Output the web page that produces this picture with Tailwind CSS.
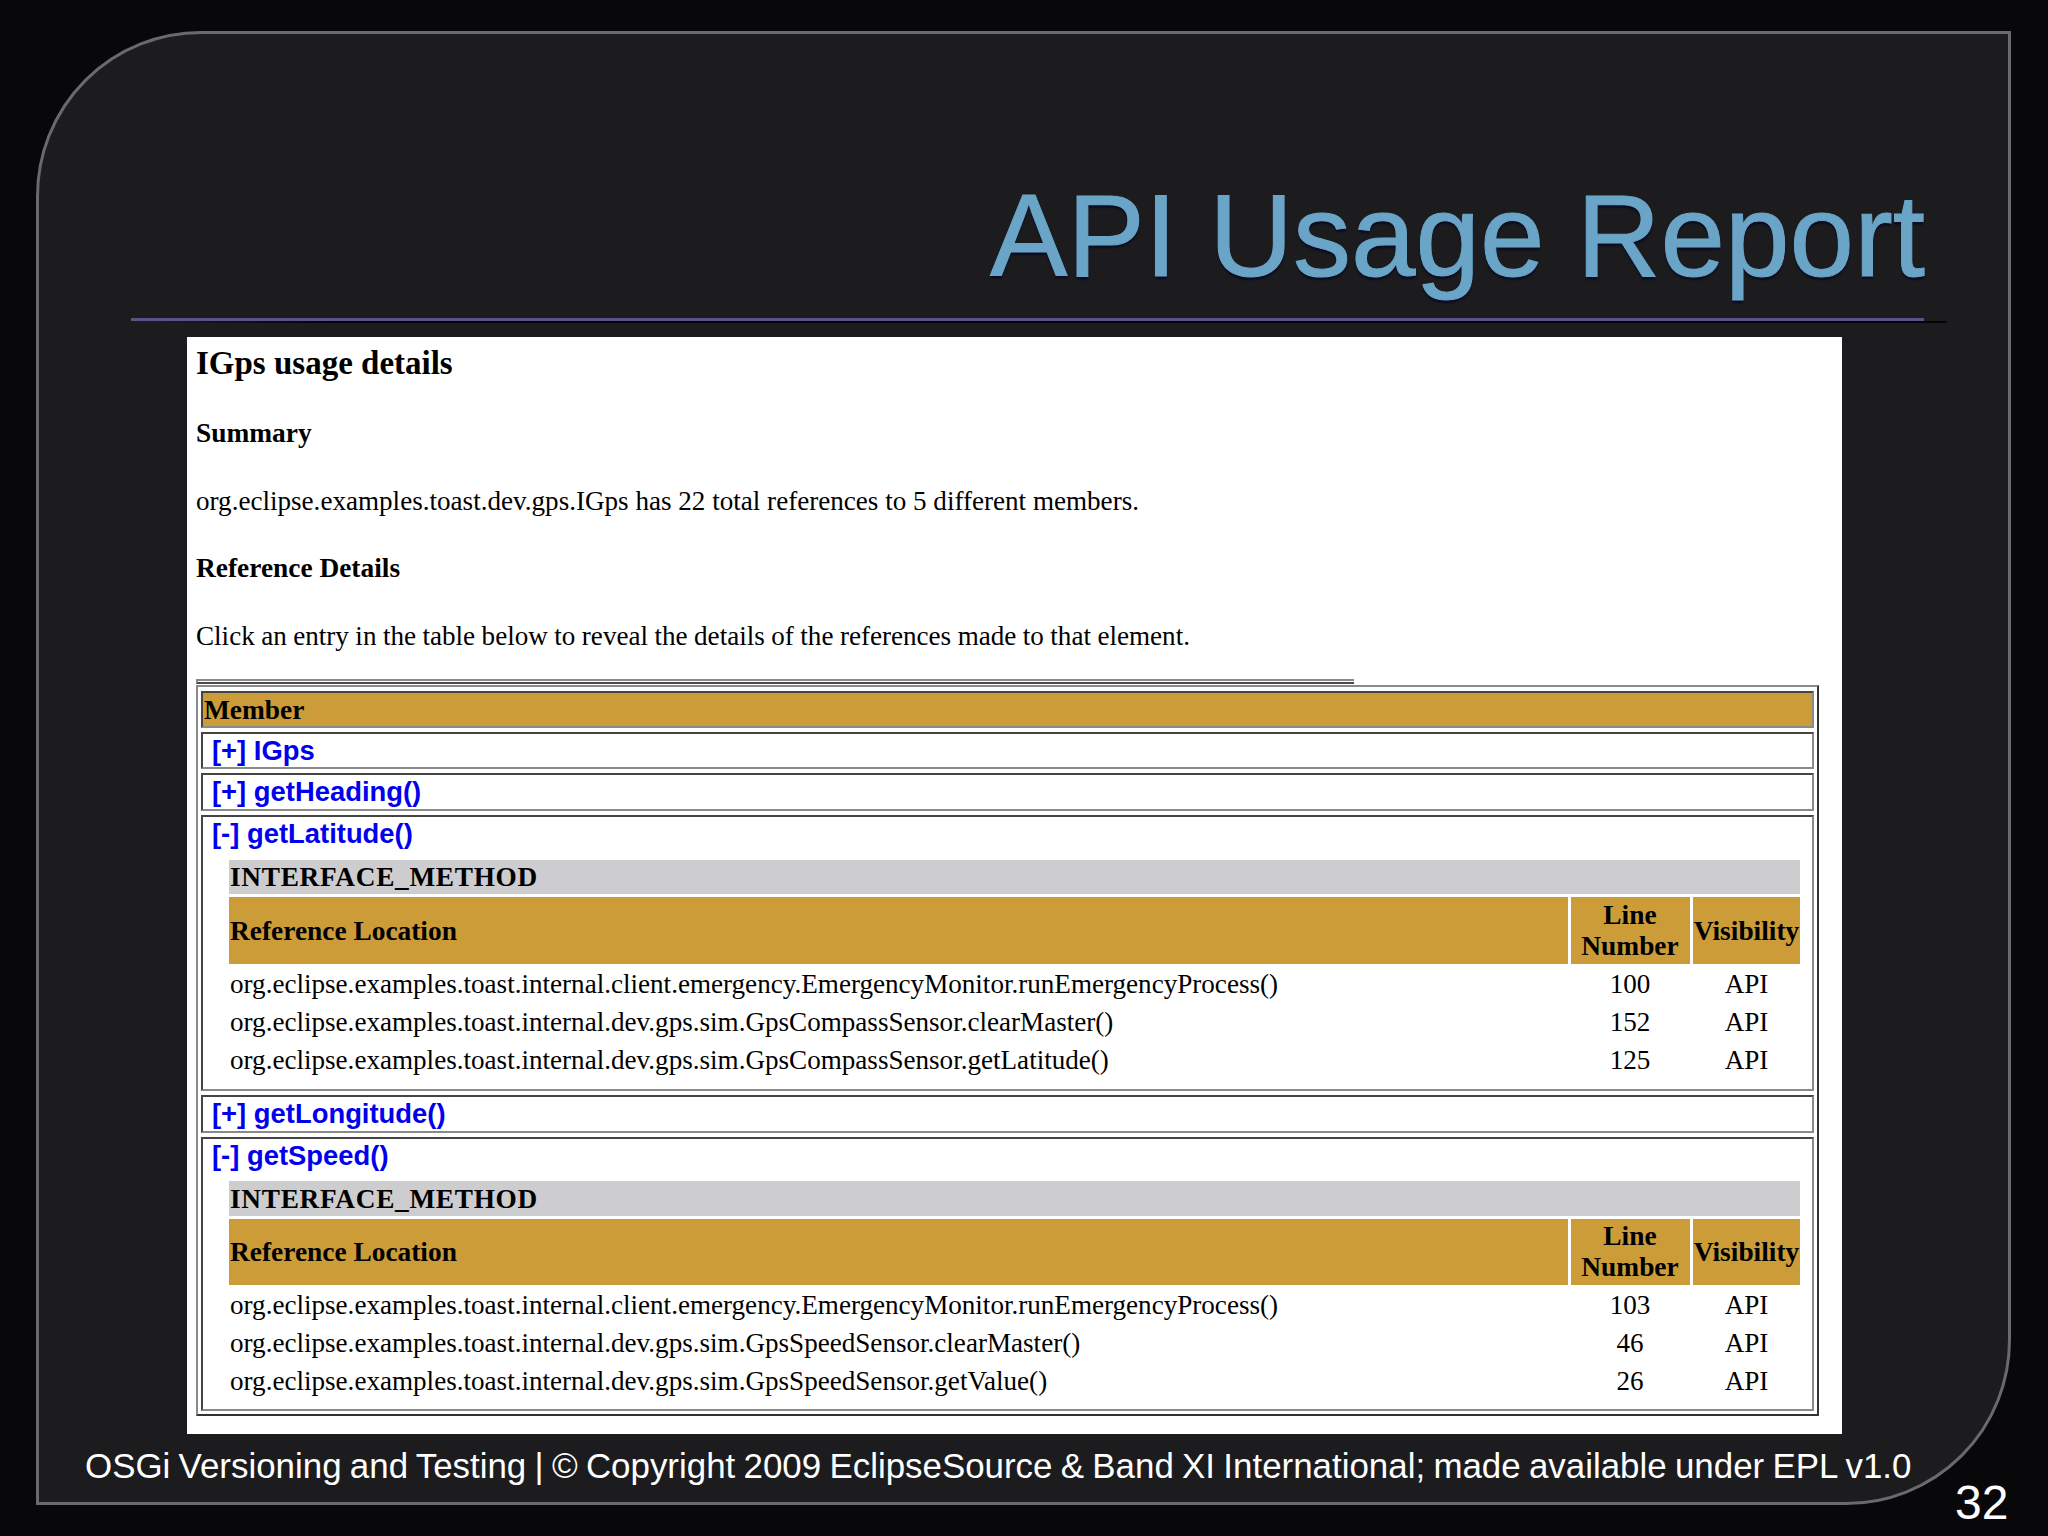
<!DOCTYPE html>
<html lang="en">
<head>
    <meta charset="UTF-8">
    <title>API Usage Report</title>
    <script src="https://cdn.jsdelivr.net/npm/@tailwindcss/browser@4"></script>
</head>
<body class="relative w-[2048px] h-[1536px] overflow-hidden bg-[#08080a] pt-[31px] pl-[36px] font-['Liberation_Sans',sans-serif]">
    <div class="flex flex-col w-[1975px] h-[1474px] border-[3px] border-[#6a6a6c] rounded-tl-[165px] rounded-br-[165px] bg-[#1c1c1f]">
        <div class="flex justify-end items-end h-[284px] pr-[83px] pb-[24px]">
            <h1 class="text-[116px] leading-[116px] text-[#6aa5c8] [-webkit-text-stroke:1px_#6aa5c8] [text-shadow:0_3px_2px_#0b0b22]">API Usage Report</h1>
        </div>
        <div class="ml-[92px] w-[1793px] h-[3px] bg-[#5c5285]"></div>
        <div class="ml-[120px] w-[1788px] h-[2px] bg-gradient-to-r from-[#1c1c1f] to-[#050505] to-[10%]"></div>

        <div class="ml-[148px] mt-[14px] w-[1655px] h-[1097px] bg-white pl-[9px] text-black font-['Liberation_Serif',serif] text-[27.1px] leading-[34px]">
            <h2 class="pt-[6px] text-[33px] leading-[40px] font-bold">IGps usage details</h2>
            <h3 class="mt-[33px] text-[27.4px] font-bold">Summary</h3>
            <p class="mt-[34px]">org.eclipse.examples.toast.dev.gps.IGps has 22 total references to 5 different members.</p>
            <h3 class="mt-[33px] text-[27.4px] font-bold">Reference Details</h3>
            <p class="mt-[34px] [word-spacing:-0.3px]">Click an entry in the table below to reveal the details of the references made to that element.</p>
            <div class="mt-[26px] w-[1158px] h-[5px] border-t-2 border-l-2 border-[#8a8a8a] border-b-2 border-b-[#4a4a4a]"></div>

            <div class="flex flex-col gap-[4px] mt-[1px] w-[1623px] h-[731px] border-2 border-[#8a8a8a] border-r-[#333] border-b-[#333] pt-[4px] px-[3px]">
                <div class="flex items-center h-[37px] pl-[1px] bg-[#cc9c38] border-2 border-[#444] border-r-[#8a8a8a] border-b-[#8a8a8a] text-[27.4px] font-bold">Member</div>
                <div class="flex items-center h-[37px] pl-[9px] border-2 border-[#444] border-r-[#8a8a8a] border-b-[#8a8a8a] font-['Liberation_Sans',sans-serif] text-[27.4px] font-bold text-[#0000ee]">[+] IGps</div>
                <div class="flex items-center h-[38px] pl-[9px] border-2 border-[#444] border-r-[#8a8a8a] border-b-[#8a8a8a] font-['Liberation_Sans',sans-serif] text-[27.4px] font-bold text-[#0000ee]">[+] getHeading()</div>

                <div class="h-[276px] border-2 border-[#444] border-r-[#8a8a8a] border-b-[#8a8a8a]">
                    <div class="flex items-center h-[34px] pl-[9px] font-['Liberation_Sans',sans-serif] text-[27.4px] font-bold text-[#0000ee]">[-] getLatitude()</div>
                    <div class="grid grid-cols-[1339px_119px_107px] gap-x-[3px] ml-[26px] mt-[9px]">
                        <div class="col-span-3 flex items-center h-[34px] pl-[1px] bg-[#cdcdd0] text-[27.3px] tracking-[0.7px] font-bold">INTERFACE_METHOD</div>
                        <div class="flex items-center h-[67px] mt-[3px] pl-[1px] bg-[#cc9c38] text-[27.4px] font-bold">Reference Location</div>
                        <div class="flex items-center justify-center h-[67px] mt-[3px] pr-[1px] bg-[#cc9c38] text-[27.4px] font-bold text-center leading-[31px]">Line<br>Number</div>
                        <div class="flex items-center justify-center h-[67px] mt-[3px] bg-[#cc9c38] text-[27.4px] font-bold">Visibility</div>
                        <div class="flex items-center h-[38px] mt-[1px] pl-[1px]">org.eclipse.examples.toast.internal.client.emergency.EmergencyMonitor.runEmergencyProcess()</div>
                        <div class="flex items-center justify-center h-[38px] mt-[1px] pr-[1px]">100</div>
                        <div class="flex items-center justify-center h-[38px] mt-[1px]">API</div>
                        <div class="flex items-center h-[38px] pl-[1px]">org.eclipse.examples.toast.internal.dev.gps.sim.GpsCompassSensor.clearMaster()</div>
                        <div class="flex items-center justify-center h-[38px] pr-[1px]">152</div>
                        <div class="flex items-center justify-center h-[38px]">API</div>
                        <div class="flex items-center h-[38px] pl-[1px]">org.eclipse.examples.toast.internal.dev.gps.sim.GpsCompassSensor.getLatitude()</div>
                        <div class="flex items-center justify-center h-[38px] pr-[1px]">125</div>
                        <div class="flex items-center justify-center h-[38px]">API</div>
                    </div>
                </div>

                <div class="flex items-center h-[38px] pl-[9px] border-2 border-[#444] border-r-[#8a8a8a] border-b-[#8a8a8a] font-['Liberation_Sans',sans-serif] text-[27.4px] font-bold text-[#0000ee]">[+] getLongitude()</div>

                <div class="h-[274px] border-2 border-[#444] border-r-[#8a8a8a] border-b-[#8a8a8a]">
                    <div class="flex items-center h-[34px] pl-[9px] font-['Liberation_Sans',sans-serif] text-[27.4px] font-bold text-[#0000ee]">[-] getSpeed()</div>
                    <div class="grid grid-cols-[1339px_119px_107px] gap-x-[3px] ml-[26px] mt-[8px]">
                        <div class="col-span-3 flex items-center h-[35px] pl-[1px] bg-[#cdcdd0] text-[27.3px] tracking-[0.7px] font-bold">INTERFACE_METHOD</div>
                        <div class="flex items-center h-[66px] mt-[3px] pl-[1px] bg-[#cc9c38] text-[27.4px] font-bold">Reference Location</div>
                        <div class="flex items-center justify-center h-[66px] mt-[3px] pr-[1px] bg-[#cc9c38] text-[27.4px] font-bold text-center leading-[31px]">Line<br>Number</div>
                        <div class="flex items-center justify-center h-[66px] mt-[3px] bg-[#cc9c38] text-[27.4px] font-bold">Visibility</div>
                        <div class="flex items-center h-[38px] mt-[1px] pl-[1px]">org.eclipse.examples.toast.internal.client.emergency.EmergencyMonitor.runEmergencyProcess()</div>
                        <div class="flex items-center justify-center h-[38px] mt-[1px] pr-[1px]">103</div>
                        <div class="flex items-center justify-center h-[38px] mt-[1px]">API</div>
                        <div class="flex items-center h-[38px] pl-[1px]">org.eclipse.examples.toast.internal.dev.gps.sim.GpsSpeedSensor.clearMaster()</div>
                        <div class="flex items-center justify-center h-[38px] pr-[1px]">46</div>
                        <div class="flex items-center justify-center h-[38px]">API</div>
                        <div class="flex items-center h-[38px] pl-[1px]">org.eclipse.examples.toast.internal.dev.gps.sim.GpsSpeedSensor.getValue()</div>
                        <div class="flex items-center justify-center h-[38px] pr-[1px]">26</div>
                        <div class="flex items-center justify-center h-[38px]">API</div>
                    </div>
                </div>
            </div>
        </div>

        <p class="ml-[46px] mt-[12px] text-[34.9px] leading-[40px] [word-spacing:-1.4px] text-white whitespace-nowrap">OSGi Versioning and Testing | © Copyright 2009 EclipseSource &amp; Band XI International; made available under EPL v1.0</p>
    </div>
    <!-- page number sits on top of the frame corner -->
    <div class="absolute left-[1955px] top-[1478px] text-[48px] leading-[50px] text-white">32</div>
</body>
</html>
